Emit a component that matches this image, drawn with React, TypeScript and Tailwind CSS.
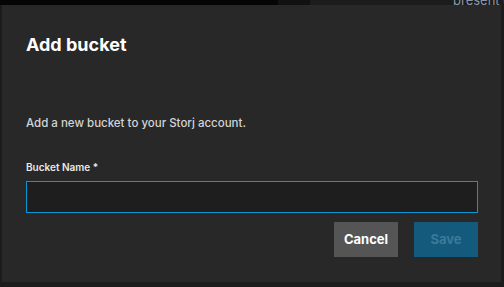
import React from 'react';

const FONT = { fontFamily: 'Inter, Roboto, "Liberation Sans", sans-serif' };

export default function App() {
  return (
    <div className="relative w-[504px] h-[287px] bg-[#1c1c1c] overflow-hidden" style={FONT}>
      {/* backdrop behind the dialog */}
      <div className="flex h-[5px]">
        <div className="w-[278px] bg-[#050505]" />
        <div className="w-[32px] bg-[#111111]" />
        <div className="flex-1 bg-[#1c1c1c]" />
      </div>
      <span className="absolute left-[453px] top-[-9px] text-[13px] text-[#8a96a8] whitespace-nowrap">present c</span>

      {/* dialog */}
      <div className="absolute left-[2px] top-[5px] w-[499px] h-[277px] bg-[#282828] pl-[24px] pr-[23px] flex flex-col">
        <h2 className="mt-[29px] text-[18px] font-bold text-white leading-[22px]">Add bucket</h2>
        <p className="mt-[60px] text-[11.5px] font-medium text-[#d4d4d4] leading-[15px]">Add a new bucket to your Storj account.</p>
        <label className="mt-[30px] text-[10px] font-semibold text-[#e8e8e8] leading-[12px]">Bucket Name *</label>
        <input
          className="mt-[8px] h-[32px] w-full bg-[#1e1e1e] border border-[#0b95d6] outline-none text-white px-2 text-[13px]"
          type="text"
        />
        <div className="mt-[9px] flex justify-end gap-[16px]">
          <button className="w-[64px] h-[35px] bg-[#555555] text-white text-[13px] font-bold">Cancel</button>
          <button className="w-[64px] h-[35px] bg-[#135a7c] text-[#3a7a99] text-[13px] font-bold">Save</button>
        </div>
      </div>
    </div>
  );
}
